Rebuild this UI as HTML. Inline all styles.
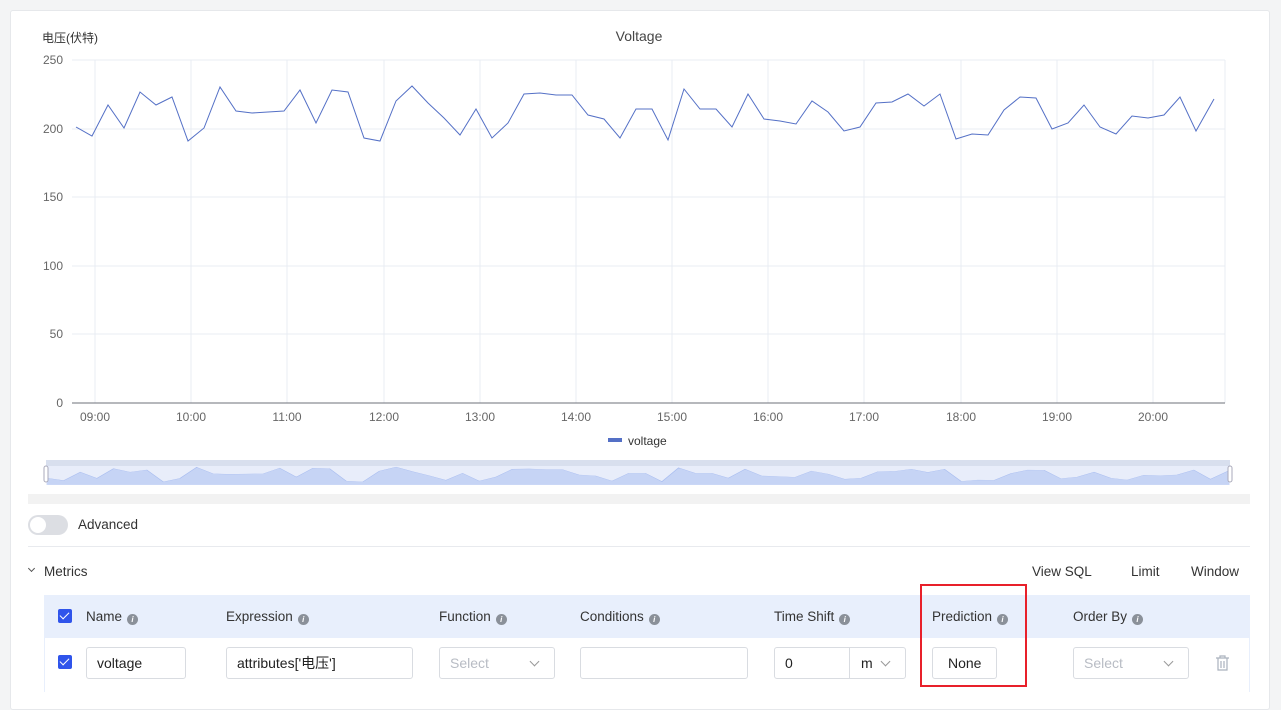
<!DOCTYPE html>
<html><head><meta charset="utf-8"><style>
*{box-sizing:border-box;margin:0;padding:0}
body{width:1281px;height:692px;overflow:hidden;background:#f3f4f5;font-family:"Liberation Sans","Noto Sans CJK SC",sans-serif;color:#333;position:relative}
.card{position:absolute;left:10px;top:10px;width:1260px;height:700px;background:#fff;border:1px solid #e6e8eb;border-radius:3px}
.abs{position:absolute}
.t{font-size:13.5px;color:#333}
.hdr{position:absolute;left:44px;top:595px;width:1206px;height:43px;background:#e8effc}
.info{display:inline-block;width:11px;height:11px;border-radius:50%;background:#8a9099;color:#fff;font-size:8px;line-height:11px;text-align:center;font-style:italic;font-weight:bold;vertical-align:-1px;margin-left:5px}
.cb{position:absolute;width:14px;height:14px;background:#2f54eb;border-radius:2px}
.cb:after{content:"";position:absolute;left:4px;top:1px;width:4px;height:8px;border:solid #fff;border-width:0 1.5px 1.5px 0;transform:rotate(45deg)}
.inp{position:absolute;top:647px;height:32px;border:1px solid #d9dce1;border-radius:3px;font-size:14px;line-height:30px;padding-left:10px;color:#222;background:#fff}
.ph{color:#b8bcc4}
.chev{position:absolute;width:7px;height:7px;border:solid #999;border-width:0 1px 1px 0;transform:rotate(45deg)}
</style></head><body>
<div class="card"></div>
<svg class="abs" style="left:0;top:0" width="1281" height="510">
<g stroke="#e9ecf3" stroke-width="1">
<line x1="72" y1="60" x2="1225" y2="60"/><line x1="72" y1="129" x2="1225" y2="129"/><line x1="72" y1="197" x2="1225" y2="197"/><line x1="72" y1="266" x2="1225" y2="266"/><line x1="72" y1="334" x2="1225" y2="334"/>
<line x1="95" y1="60" x2="95" y2="403"/><line x1="191" y1="60" x2="191" y2="403"/><line x1="287" y1="60" x2="287" y2="403"/><line x1="384" y1="60" x2="384" y2="403"/><line x1="480" y1="60" x2="480" y2="403"/><line x1="576" y1="60" x2="576" y2="403"/><line x1="672" y1="60" x2="672" y2="403"/><line x1="768" y1="60" x2="768" y2="403"/><line x1="864" y1="60" x2="864" y2="403"/><line x1="961" y1="60" x2="961" y2="403"/><line x1="1057" y1="60" x2="1057" y2="403"/><line x1="1153" y1="60" x2="1153" y2="403"/><line x1="1225" y1="60" x2="1225" y2="403"/>
</g>
<line x1="72" y1="403" x2="1225" y2="403" stroke="#6e7079"/>
<g font-size="12" fill="#666" text-anchor="end" font-family="Liberation Sans">
<text x="63" y="64">250</text><text x="63" y="133">200</text><text x="63" y="201">150</text><text x="63" y="270">100</text><text x="63" y="338">50</text><text x="63" y="407">0</text></g>
<g font-size="12" fill="#666" text-anchor="middle" font-family="Liberation Sans">
<text x="95" y="421">09:00</text><text x="191" y="421">10:00</text><text x="287" y="421">11:00</text><text x="384" y="421">12:00</text><text x="480" y="421">13:00</text><text x="576" y="421">14:00</text><text x="672" y="421">15:00</text><text x="768" y="421">16:00</text><text x="864" y="421">17:00</text><text x="961" y="421">18:00</text><text x="1057" y="421">19:00</text><text x="1153" y="421">20:00</text></g>
<text x="42" y="42" font-size="12" fill="#333" font-family="Liberation Sans,Noto Sans CJK SC">电压(伏特)</text>
<text x="639" y="41" font-size="14" fill="#464646" text-anchor="middle" font-family="Liberation Sans">Voltage</text>
<defs><polyline id="d" points="76,127 92,136 108,105 124,128 140,92 156,105 172,97 188,141 204,128 220,87 236,111 252,113 268,112 284,111 300,90 316,123 332,90 348,92 364,138 380,141 396,101 412,86 428,103 444,118 460,135 476,109 492,138 508,123 524,94 540,93 556,95 572,95 588,115 604,119 620,138 636,109 652,109 668,140 684,89 700,109 716,109 732,127 748,94 764,119 780,121 796,124 812,101 828,112 844,131 860,127 876,103 892,102 908,94 924,106 940,94 956,139 972,134 988,135 1004,110 1020,97 1036,98 1052,129 1068,123 1084,105 1100,127 1116,134 1132,116 1148,118 1164,115 1180,97 1196,131 1214,99"/></defs>
<use href="#d" fill="none" stroke="#5470c6" stroke-width="1"/>
<rect x="46" y="460" width="1184" height="25" fill="#e8edfa"/>
<rect x="46" y="460" width="1184" height="6" fill="#d8dfee"/>
<g transform="translate(-31.9,443.8) scale(1.0387,0.27)">
<polygon fill="#c6d4f5" points="76,152 76,127 92,136 108,105 124,128 140,92 156,105 172,97 188,141 204,128 220,87 236,111 252,113 268,112 284,111 300,90 316,123 332,90 348,92 364,138 380,141 396,101 412,86 428,103 444,118 460,135 476,109 492,138 508,123 524,94 540,93 556,95 572,95 588,115 604,119 620,138 636,109 652,109 668,140 684,89 700,109 716,109 732,127 748,94 764,119 780,121 796,124 812,101 828,112 844,131 860,127 876,103 892,102 908,94 924,106 940,94 956,139 972,134 988,135 1004,110 1020,97 1036,98 1052,129 1068,123 1084,105 1100,127 1116,134 1132,116 1148,118 1164,115 1180,97 1196,131 1214,99 1214,152"/>
<use href="#d" fill="none" stroke="#a9bdf0" stroke-width="1" vector-effect="non-scaling-stroke"/>
</g>
<rect x="44" y="466" width="4" height="16" rx="2" fill="#fff" stroke="#aab"/>
<rect x="1228" y="466" width="4" height="16" rx="2" fill="#fff" stroke="#aab"/>
<rect x="28" y="494" width="1222" height="10" fill="#f2f2f2"/>
<rect x="608" y="438" width="14" height="4" fill="#5470c6"/>
<text x="628" y="445" font-size="12" fill="#333" font-family="Liberation Sans">voltage</text>
</svg>
<div class="abs" style="left:28px;top:515px;width:40px;height:20px;border-radius:10px;background:#dcdee3"><div style="position:absolute;left:2px;top:2px;width:16px;height:16px;border-radius:50%;background:#fff"></div></div>
<div class="abs t" style="left:78px;top:517px">Advanced</div>
<div class="abs" style="left:28px;top:546px;width:1222px;height:1px;background:#e8eaee"></div>
<div class="chev" style="left:29px;top:566px;width:5px;height:5px;border-color:#555"></div>
<div class="abs t" style="left:44px;top:564px">Metrics</div>
<div class="abs t" style="left:1032px;top:564px">View SQL</div>
<div class="abs t" style="left:1131px;top:564px">Limit</div>
<div class="abs t" style="left:1191px;top:564px">Window</div>
<div class="hdr"></div>
<div class="abs" style="left:44px;top:638px;width:1206px;height:54px;border-left:1px solid #e8effc;border-right:1px solid #e8effc"></div>
<div class="cb" style="left:58px;top:609px"></div>
<div class="cb" style="left:58px;top:655px"></div>
<div class="abs t" style="left:86px;top:609px">Name<span class="info">i</span></div>
<div class="abs t" style="left:226px;top:609px">Expression<span class="info">i</span></div>
<div class="abs t" style="left:439px;top:609px">Function<span class="info">i</span></div>
<div class="abs t" style="left:580px;top:609px">Conditions<span class="info">i</span></div>
<div class="abs t" style="left:774px;top:609px">Time Shift<span class="info">i</span></div>
<div class="abs t" style="left:932px;top:609px">Prediction<span class="info">i</span></div>
<div class="abs t" style="left:1073px;top:609px">Order By<span class="info">i</span></div>
<div class="inp" style="left:86px;width:100px">voltage</div>
<div class="inp" style="left:226px;width:187px">attributes['电压']</div>
<div class="inp ph" style="left:439px;width:116px">Select</div><div class="chev" style="left:531px;top:658px"></div>
<div class="inp" style="left:580px;width:168px"></div>
<div class="inp" style="left:774px;width:132px">0<div style="position:absolute;left:74px;top:0;width:1px;height:30px;background:#d9dce1"></div><span style="position:absolute;left:86px">m</span></div><div class="chev" style="left:882px;top:658px"></div>
<div class="inp" style="left:932px;width:65px;padding-left:15px">None</div>
<div class="inp ph" style="left:1073px;width:116px">Select</div><div class="chev" style="left:1165px;top:658px"></div>
<svg class="abs" style="left:1215px;top:655px" width="15" height="16"><g fill="none" stroke="#aab2bd" stroke-width="1.2"><path d="M1 3h13M5 3V1h5v2M3 3v12h9V3M6 6v7M9 6v7"/></g></svg>
<div class="abs" style="left:920px;top:584px;width:107px;height:103px;border:2px solid #e8202a"></div>
</body></html>
